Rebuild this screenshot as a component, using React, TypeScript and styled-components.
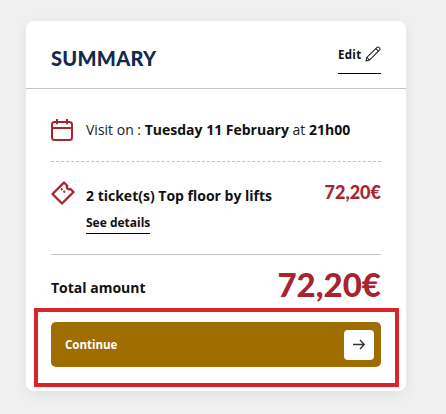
import React from "react"
import styled, { createGlobalStyle } from "styled-components"

const GlobalStyle = createGlobalStyle`
  html, body {
    margin: 0;
    padding: 0;
    background: #f0f0f0;
    font-family: "Open Sans", "Liberation Sans", sans-serif;
    overflow: hidden;
  }
`

const Page = styled.div`
  width: 446px;
  height: 414px;
  padding: 21px 40px 0 26px;
  box-sizing: border-box;
`
const Card = styled.div`
  width: 380px;
  height: 370px;
  background: #fff;
  border-radius: 8px;
  box-shadow: 0 3px 14px rgba(0, 0, 0, 0.07);
  display: flex;
  flex-direction: column;
`
const Header = styled.div`
  height: 68px;
  box-sizing: border-box;
  border-bottom: 1px solid #c4c4c4;
  padding: 24px 25px 0;
  display: flex;
  justify-content: space-between;
  align-items: flex-start;
`
const Title = styled.h2`
  margin: 0;
  font-family: "Lato", sans-serif;
  font-weight: 900;
  font-size: 20px;
  line-height: 26px;
  letter-spacing: 0.3px;
  color: #14294b;
`
const EditLink = styled.a`
  display: flex;
  align-items: flex-start;
  gap: 4px;
  height: 27px;
  width: 43px;
  padding-top: 1px;
  border-bottom: 1px solid #000;
  font-size: 11.5px;
  line-height: 18px;
  font-weight: 700;
  letter-spacing: 0.3px;
  color: #111;
`
const Body = styled.div`
  padding: 0 25px;
  display: flex;
  flex-direction: column;
`
const VisitRow = styled.div`
  height: 73px;
  box-sizing: border-box;
  padding-top: 9px;
  border-bottom: 1px dashed #c4c4c4;
  display: flex;
  align-items: center;
  gap: 13px;
  font-size: 14px;
  color: #222;
`
const Strong = styled.strong`
  font-weight: 700;
  color: #111;
`
const TicketRow = styled.div`
  height: 93px;
  box-sizing: border-box;
  padding-top: 22px;
  border-bottom: 1px solid #c4c4c4;
  display: flex;
  align-items: flex-start;
  gap: 11px;
`
const TicketInfo = styled.div`
  flex: 1;
  display: flex;
  flex-direction: column;
  align-items: flex-start;
`
const TicketName = styled.div`
  font-size: 14px;
  line-height: 24px;
  font-weight: 700;
  color: #111;
`
const DetailsLink = styled.a`
  margin-top: 5px;
  width: 64px;
  height: 20px;
  border-bottom: 1px solid #000;
  font-size: 12px;
  line-height: 19px;
  font-weight: 700;
  color: #111;
  white-space: nowrap;
`
const Price = styled.div<{ $large?: boolean }>`
  font-family: "Lato", sans-serif;
  font-weight: 900;
  font-size: ${({ $large }) => ($large ? "33px" : "18px")};
  line-height: ${({ $large }) => ($large ? "36px" : "22px")};
  margin-top: ${({ $large }) => ($large ? "-7px" : "-3px")};
  color: #a82530;
`
const TotalRow = styled.div`
  height: 53px;
  padding-top: 12px;
  box-sizing: border-box;
  display: flex;
  justify-content: space-between;
  align-items: center;
`
const TotalLabel = styled.div`
  font-size: 14px;
  font-weight: 700;
  color: #111;
`
const Highlight = styled.div`
  margin: 0 7px 0 8px;
  height: 79px;
  box-sizing: border-box;
  border: 4px solid #dc2327;
  padding: 10px 14px 16px 13px;
`
const ContinueButton = styled.button`
  width: 100%;
  height: 45px;
  border: 0;
  border-radius: 5px;
  background: #9f6d00;
  padding: 0 7px 0 14px;
  display: flex;
  justify-content: space-between;
  align-items: center;
  color: #fff;
  font-family: "Open Sans", sans-serif;
  font-size: 11.5px;
  font-weight: 700;
`
const ArrowBox = styled.span`
  width: 30px;
  height: 30px;
  border-radius: 4px;
  background: #fff;
  display: flex;
  align-items: center;
  justify-content: center;
`

const CalendarIcon = () => (
  <svg width="22" height="22" viewBox="0 0 22 22" fill="none" stroke="#a82530" strokeWidth="2" style={{ flex: "none" }}>
    <rect x="1" y="3" width="20" height="18" rx="2.5" />
    <path d="M1 9h20M6 0.5v4M16 0.5v4" strokeLinecap="round" />
  </svg>
)

const TicketIcon = () => (
  <svg width="24" height="24" viewBox="0 0 24 24" fill="none" stroke="#a82530" strokeWidth="2.3" style={{ flex: "none", marginTop: -3 }} strokeLinejoin="round">
    <path d="M1.5 13 13 1.5l3.2 3.2a2.4 2.4 0 0 0 3.3 3.3l3 3L11 22.5z" />
    <path d="M10 7.500l1.500 1.500M12.500 10l1.500 1.500" strokeWidth="1.8" />
  </svg>
)

const PencilIcon = () => (
  <svg width="16" height="16" viewBox="0 0 17 17" fill="none" stroke="#222" strokeWidth="1.1" strokeLinejoin="round" style={{ flex: "none" }}>
    <path d="M1 16l1-3.800L12.800 1.400a1.400 1.400 0 0 1 2 0l.8.8a1.400 1.400 0 0 1 0 2L4.800 15z" />
    <path d="M2 12.200l2.800 2.800M11.500 2.700l2.800 2.800" />
  </svg>
)

const ArrowIcon = () => (
  <svg width="12" height="11" viewBox="0 0 12 11" fill="none" stroke="#333" strokeWidth="1.3">
    <path d="M0 5.5h11M7 1l4.300 4.500L7 10" />
  </svg>
)

export default function App() {
  return (
    <Page>
      <GlobalStyle />
      <Card>
        <Header>
          <Title>SUMMARY</Title>
          <EditLink>
            Edit <PencilIcon />
          </EditLink>
        </Header>
        <Body>
          <VisitRow>
            <CalendarIcon />
            <span>
              Visit on : <Strong>Tuesday 11 February</Strong> at <Strong>21h00</Strong>
            </span>
          </VisitRow>
          <TicketRow>
            <TicketIcon />
            <TicketInfo>
              <TicketName>2 ticket(s) Top floor by lifts</TicketName>
              <DetailsLink>See details</DetailsLink>
            </TicketInfo>
            <Price>72,20€</Price>
          </TicketRow>
          <TotalRow>
            <TotalLabel>Total amount</TotalLabel>
            <Price $large>72,20€</Price>
          </TotalRow>
        </Body>
        <Highlight>
          <ContinueButton>
            Continue
            <ArrowBox>
              <ArrowIcon />
            </ArrowBox>
          </ContinueButton>
        </Highlight>
      </Card>
    </Page>
  )
}
